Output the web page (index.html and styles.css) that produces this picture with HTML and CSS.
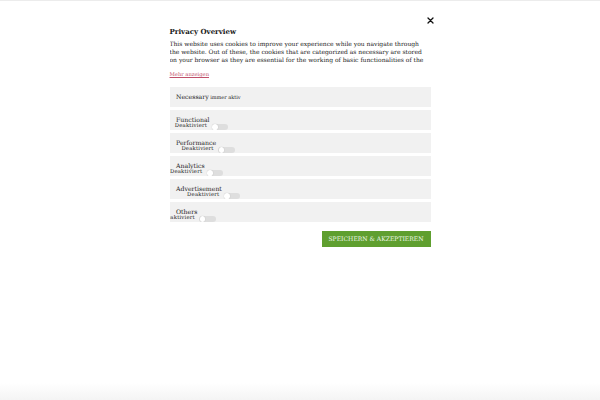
FILE: index.html
```html
<!DOCTYPE html>
<html lang="de">
<head>
    <meta charset="UTF-8">
    <title>Privacy Overview</title>
    <link rel="stylesheet" href="styles.css">
</head>
<body>
    <div class="modal">
        <div class="modalHead">
            <button class="closeButton" aria-label="Close">
                <svg width="7" height="7" viewBox="0 0 7 7"><path d="M1 1 L6 6 M6 1 L1 6" stroke="#111" stroke-width="1.3" stroke-linecap="round"/></svg>
            </button>
        </div>
        <h2 class="title">Privacy Overview</h2>
        <p class="intro">This website uses cookies to improve your experience while you navigate through the website. Out of these, the cookies that are categorized as necessary are stored on your browser as they are essential for the working of basic functionalities of the website. We also use third-party cookies that help us analyze and understand how you use this website.</p>
        <a class="moreLink" href="#">Mehr anzeigen</a>

        <div class="categories">
            <div class="category plain">
                <span class="categoryName">Necessary</span>
                <span class="alwaysOn">immer aktiv</span>
            </div>
            <div class="category">
                <div class="categoryWrap">
                    <span class="categoryName">Functional</span>
                    <div class="categoryState"><span class="stateText">Deaktiviert</span><span class="switch"></span></div>
                </div>
            </div>
            <div class="category">
                <div class="categoryWrap">
                    <span class="categoryName">Performance</span>
                    <div class="categoryState"><span class="stateText">Deaktiviert</span><span class="switch"></span></div>
                </div>
            </div>
            <div class="category">
                <div class="categoryWrap">
                    <span class="categoryName">Analytics</span>
                    <div class="categoryState"><span class="stateText">Deaktiviert</span><span class="switch"></span></div>
                </div>
            </div>
            <div class="category">
                <div class="categoryWrap">
                    <span class="categoryName">Advertisement</span>
                    <div class="categoryState"><span class="stateText">Deaktiviert</span><span class="switch"></span></div>
                </div>
            </div>
            <div class="category">
                <div class="categoryWrap">
                    <span class="categoryName">Others</span>
                    <div class="categoryState"><span class="stateText">Deaktiviert</span><span class="switch"></span></div>
                </div>
            </div>
        </div>

        <div class="actions">
            <button class="saveButton">SPEICHERN &amp; AKZEPTIEREN</button>
        </div>
    </div>
</body>
</html>
```

FILE: styles.css
```css
html {
    height: 100%;
    background: linear-gradient(#ececec 0, #ececec 1px, #fff 1px, #fff 383px, #f4f4f4 400px);
}
body {
    margin: 0;
    font-family: "DejaVu Serif", serif;
    color: #222;
}
.modal {
    width: 261px;
    margin: 0 auto;
    padding-top: 17px;
}
.modalHead {
    display: flex;
    justify-content: flex-end;
    height: 7px;
    margin-right: -3.5px;
}
.closeButton {
    background: none;
    border: none;
    padding: 0;
    width: 7px;
    height: 7px;
    display: flex;
}
.title {
    margin: 2.5px 0 0;
    font-size: 7px;
    line-height: 9px;
    font-weight: bold;
    color: #1a1a1a;
}
.intro {
    width: 257px;
    margin: 4.2px 0 0;
    font-size: 6px;
    line-height: 8.33px;
    max-height: 25px;
    overflow: hidden;
}
.moreLink {
    display: block;
    margin-top: 6.6px;
    font-size: 5.2px;
    line-height: 7px;
    color: #c0506a;
    text-decoration: underline;
}
.categories {
    margin-top: 9.2px;
    display: flex;
    flex-direction: column;
    gap: 3px;
}
.category {
    height: 20px;
    box-sizing: border-box;
    padding: 6.5px 6.5px 0;
    background-color: #f1f1f1;
    display: flex;
    align-items: flex-start;
    overflow: hidden;
}
.category.plain {
    padding-top: 0;
    align-items: center;
    gap: 1.5px;
}
.category.plain .categoryName {
    line-height: 20px;
}
.categoryName {
    display: block;
    font-size: 6.2px;
    line-height: 6px;
    color: #222;
    white-space: nowrap;
}
.alwaysOn {
    font-size: 5px;
    color: #222;
}
.categoryState {
    contain: inline-size;
    display: flex;
    justify-content: flex-end;
    align-items: flex-start;
    gap: 4.5px;
    margin-right: -18.5px;
}
.stateText {
    flex-shrink: 0;
    font-size: 5.3px;
    letter-spacing: 0.2px;
    line-height: 5.6px;
    white-space: nowrap;
}
.switch {
    flex-shrink: 0;
    width: 16.5px;
    height: 6.5px;
    margin-top: 0.8px;
    border-radius: 4px;
    background-color: #dedede;
    position: relative;
}
.switch::before {
    content: "";
    position: absolute;
    left: 0.4px;
    top: 0.4px;
    width: 5.7px;
    height: 5.7px;
    border-radius: 50%;
    background-color: #fff;
    box-shadow: 0 0 1px rgba(0, 0, 0, 0.25);
}
.actions {
    display: flex;
    justify-content: flex-end;
    margin-top: 8.3px;
}
.saveButton {
    width: 109px;
    height: 16px;
    border: none;
    padding: 0;
    background-color: #5f9f2f;
    color: #eef7e8;
    font-family: "DejaVu Serif", serif;
    font-size: 6.05px;
}
```
